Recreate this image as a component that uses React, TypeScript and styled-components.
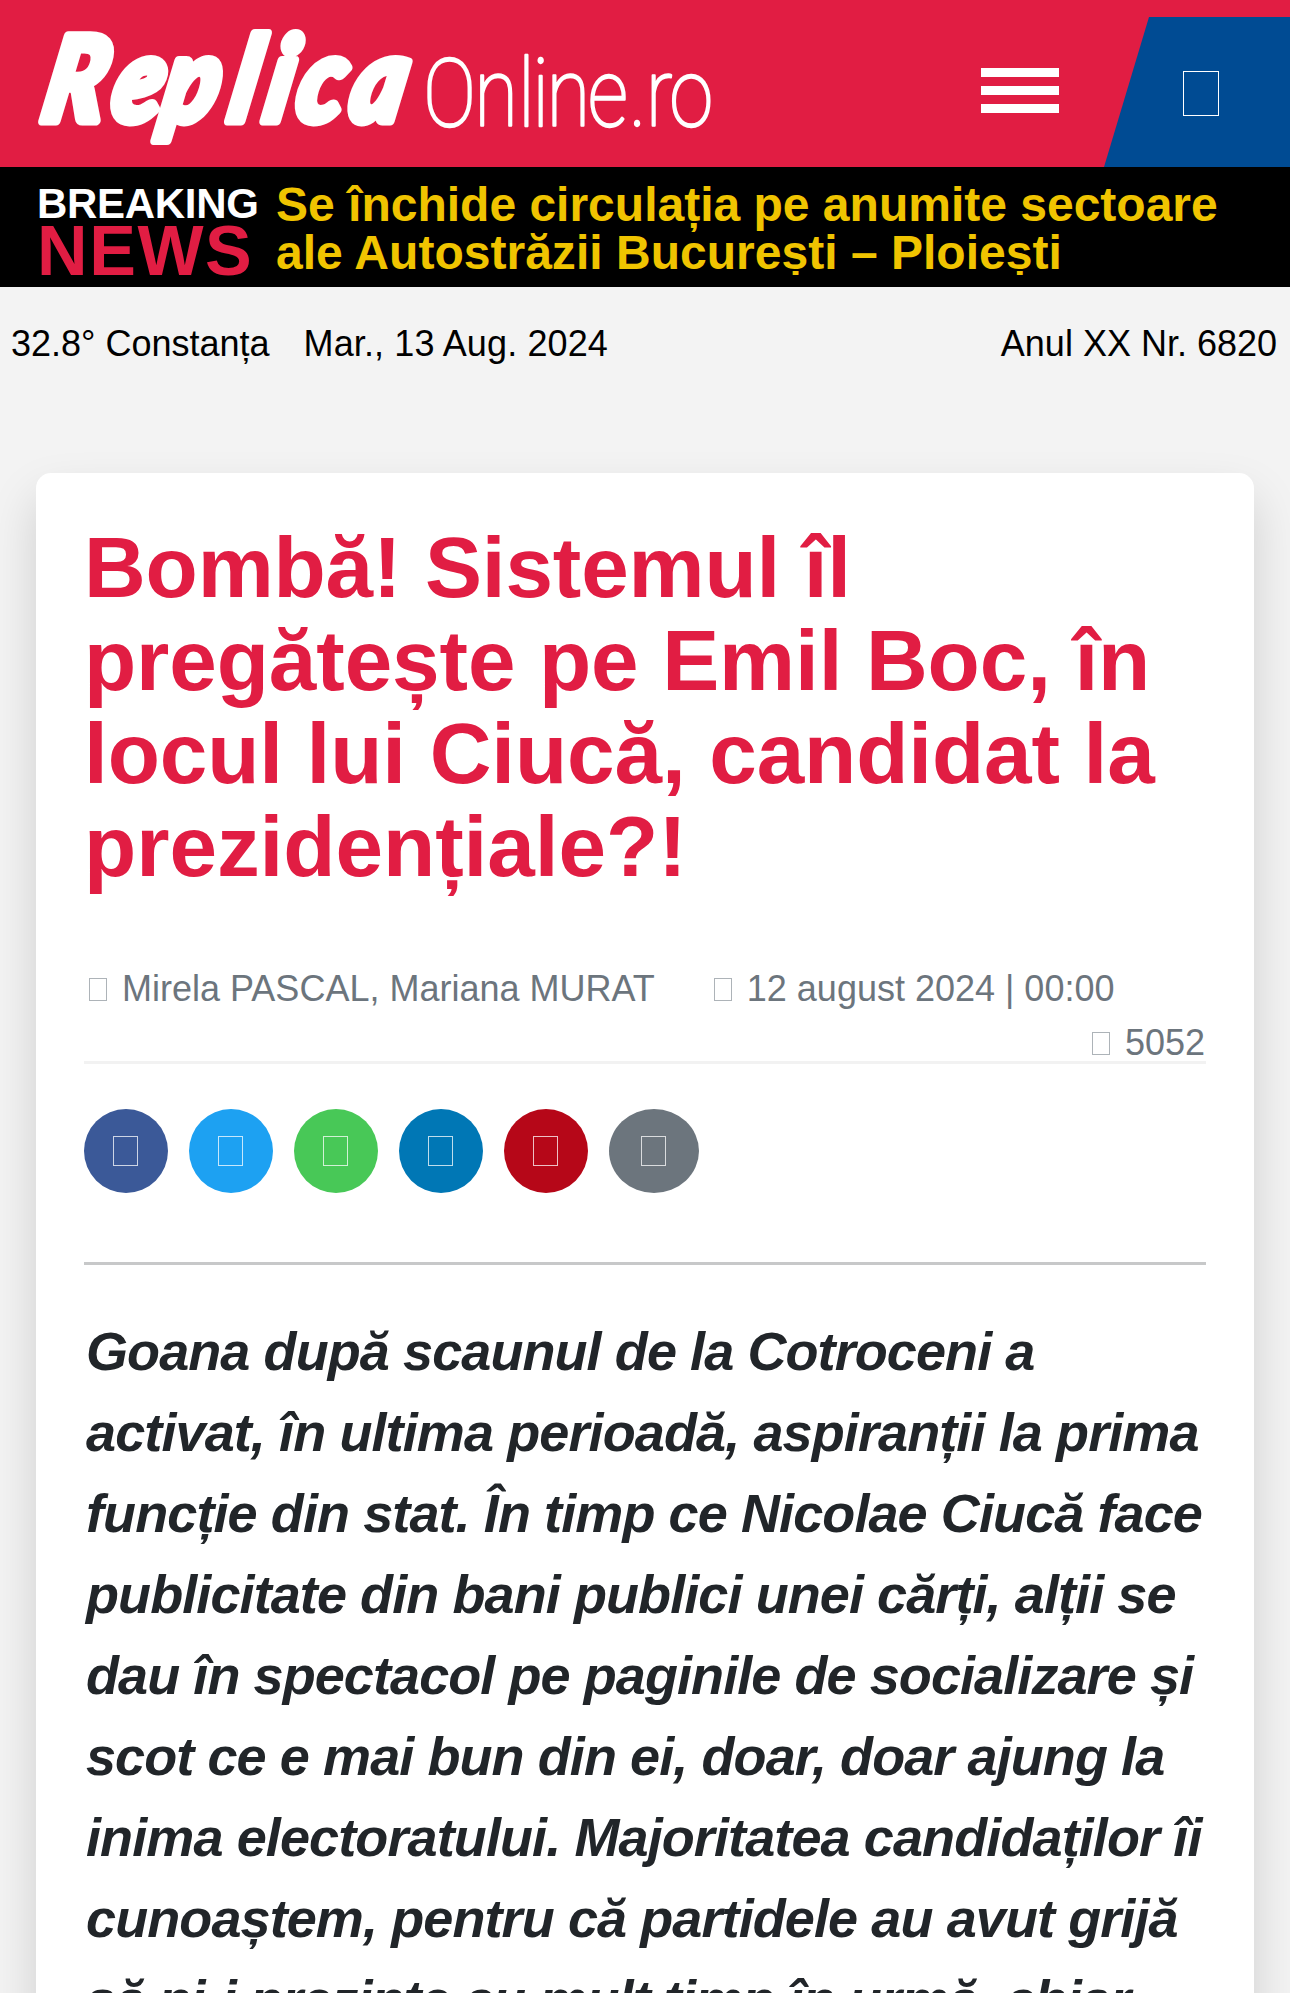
import React from "react";
import styled, { createGlobalStyle } from "styled-components";

const crimson = "#e11d43";

const GlobalStyle = createGlobalStyle`
  * { box-sizing: border-box; }
  html, body { margin: 0; padding: 0; }
  body {
    height: 1993px;
    overflow: hidden;
    background: #f3f3f3;
    color: #212529;
    font-family: "Liberation Sans", Helvetica, Arial, sans-serif;
  }
`;

const Page = styled.div`
  width: 1290px;
  height: 1993px;
  overflow: hidden;
  display: flex;
  flex-direction: column;
`;

const Header = styled.header`
  flex: none;
  height: 167px;
  background: ${crimson};
  display: flex;
  align-items: flex-end;
  justify-content: space-between;
`;

const Logo = styled.svg`
  display: block;
  width: 740px;
  height: 167px;
  overflow: visible;
`;

const Actions = styled.div`
  display: flex;
  align-items: flex-end;
  gap: 45px;
`;

const MenuButton = styled.button`
  width: 78px;
  height: 45px;
  margin: 0 0 54px;
  padding: 0;
  border: 0;
  background: none;
  display: flex;
  flex-direction: column;
  justify-content: space-between;
`;

const MenuBar = styled.span`
  height: 9px;
  background: #fff;
`;

const SearchTab = styled.div`
  width: 186px;
  height: 150px;
  padding: 54px 0 0 79px;
  background: #004b93;
  clip-path: polygon(45px 0, 100% 0, 100% 100%, 0 100%);
`;

const Glyph = styled.span<{ $w: number; $h: number; $color: string }>`
  display: block;
  flex: none;
  width: ${(p) => p.$w}px;
  height: ${(p) => p.$h}px;
  border: 1px solid ${(p) => p.$color};
`;

const Breaking = styled.section`
  flex: none;
  height: 120px;
  background: #000;
  display: flex;
  padding-left: 37px;
`;

const BreakingLabel = styled.div`
  width: 239px;
  padding-top: 18px;
  font-weight: 700;
  white-space: nowrap;
`;

const BreakingTop = styled.div`
  font-size: 42px;
  line-height: 37px;
  letter-spacing: -0.3px;
  color: #fff;
`;

const BreakingBottom = styled.div`
  font-size: 70px;
  line-height: 58px;
  letter-spacing: 1.6px;
  color: ${crimson};
`;

const BreakingTitle = styled.div`
  height: 94px;
  margin-top: 14px;
  overflow: hidden;
  font-size: 48px;
  font-weight: 700;
  line-height: 48px;
  color: #f0c400;
  white-space: nowrap;
`;

const InfoBar = styled.div`
  flex: none;
  height: 186px;
  padding: 30px 13px 0 11px;
  display: flex;
  font-size: 36px;
  line-height: 54px;
  color: #000;
  white-space: nowrap;
`;

const InfoItem = styled.span<{ $push?: boolean; $track?: number }>`
  margin-right: ${(p) => (p.$push ? "0" : "34px")};
  margin-left: ${(p) => (p.$push ? "auto" : "0")};
  letter-spacing: ${(p) => p.$track ?? 0}px;
`;

const Card = styled.article`
  flex: none;
  height: 1700px;
  margin: 0 36px;
  padding: 48px;
  border-radius: 15px;
  background: #fff;
  box-shadow: 0 24px 48px rgba(0, 0, 0, 0.15);
`;

const Line = styled.span<{ $track?: number }>`
  display: block;
  white-space: nowrap;
  letter-spacing: ${(p) => p.$track ?? 0}px;
`;

const Title = styled.h1`
  margin: 0;
  color: ${crimson};
  font-size: 85.5px;
  font-weight: 700;
  line-height: 93px;
`;

const Meta = styled.div`
  height: 102px;
  margin-top: 69px;
  padding: 0 1px 0 5px;
  border-bottom: 3px solid #f2f2f2;
  color: #6c757d;
  font-size: 36px;
  line-height: 54px;
  white-space: nowrap;
`;

const MetaRow = styled.div<{ $end?: boolean }>`
  display: flex;
  gap: 59px;
  height: 54px;
  justify-content: ${(p) => (p.$end ? "flex-end" : "flex-start")};
`;

const MetaItem = styled.span`
  display: flex;
  gap: 15px;

  ${Glyph} {
    margin-top: 16px;
  }
`;

const ShareRow = styled.div`
  display: flex;
  gap: 21px;
  margin-top: 45px;
`;

const ShareButton = styled.span<{ $bg: string; $w?: number }>`
  width: ${(p) => p.$w ?? 84}px;
  height: 84px;
  padding-right: 1px;
  border-radius: 50%;
  background: ${(p) => p.$bg};
  display: flex;
  align-items: center;
  justify-content: center;
`;

const Divider = styled.hr`
  height: 3px;
  margin: 69px 0 46px;
  border: 0;
  background: #c7c8c9;
`;

const Lead = styled.p`
  margin: 0;
  padding-left: 2px;
  font-size: 54px;
  font-style: italic;
  font-weight: 700;
  line-height: 81px;
`;

const titleLines = [
  { text: "Bombă! Sistemul îl", track: -0.15 },
  { text: "pregătește pe Emil Boc, în", track: -0.11 },
  { text: "locul lui Ciucă, candidat la", track: -0.11 },
  { text: "prezidențiale?!", track: -0.05 },
];

const leadLines = [
  { text: "Goana după scaunul de la Cotroceni a", track: -0.91 },
  { text: "activat, în ultima perioadă, aspiranții la prima", track: -0.89 },
  { text: "funcție din stat. În timp ce Nicolae Ciucă face", track: -0.9 },
  { text: "publicitate din bani publici unei cărți, alții se", track: -0.91 },
  { text: "dau în spectacol pe paginile de socializare și", track: -0.92 },
  { text: "scot ce e mai bun din ei, doar, doar ajung la", track: -0.91 },
  { text: "inima electoratului. Majoritatea candidaților îi", track: -0.89 },
  { text: "cunoaștem, pentru că partidele au avut grijă", track: -0.9 },
  { text: "să ni-i prezinte cu mult timp în urmă, chiar", track: -0.89 },
];

const shares = [
  { name: "facebook", bg: "#3b5998" },
  { name: "twitter", bg: "#1da1f2" },
  { name: "whatsapp", bg: "#48c857" },
  { name: "linkedin", bg: "#0077b5" },
  { name: "pinterest", bg: "#b60718" },
  { name: "mail", bg: "#6c757d", w: 90 },
];

export default function App() {
  return (
    <>
      <GlobalStyle />
      <Page>
        <Header>
          <Logo viewBox="0 0 740 167">
            <g transform="translate(0 121) skewX(-11) scale(0.88 1.02)">
              <text
                x="44 123 180 257 297 333 394"
                y="0"
                fill="#fff"
                stroke="#fff"
                strokeWidth="9"
                strokeLinejoin="round"
                fontFamily="Lato, sans-serif"
                fontWeight="900"
                fontStyle="italic"
                fontSize="115"
              >
                Replica
              </text>
            </g>
            <g transform="translate(0 125.5) scale(0.84 1)">
              <text
                x="504 565 617 634 651 700 749 769 797"
                y="0"
                fill="#fff"
                stroke="#fff"
                strokeWidth="2.4"
                strokeLinejoin="round"
                fontFamily="Roboto, sans-serif"
                fontWeight="100"
                fontSize="94"
              >
                Online.ro
              </text>
            </g>
          </Logo>
          <Actions>
            <MenuButton aria-label="menu">
              <MenuBar />
              <MenuBar />
              <MenuBar />
            </MenuButton>
            <SearchTab>
              <Glyph $w={36} $h={45} $color="#fff" />
            </SearchTab>
          </Actions>
        </Header>

        <Breaking>
          <BreakingLabel>
            <BreakingTop>BREAKING</BreakingTop>
            <BreakingBottom>NEWS</BreakingBottom>
          </BreakingLabel>
          <BreakingTitle>
            <Line>Se închide circulația pe anumite sectoare</Line>
            <Line $track={0.02}>ale Autostrăzii București – Ploiești</Line>
          </BreakingTitle>
        </Breaking>

        <InfoBar>
          <InfoItem>32.8° Constanța</InfoItem>
          <InfoItem $track={0.12}>Mar., 13 Aug. 2024</InfoItem>
          <InfoItem $push>Anul XX Nr. 6820</InfoItem>
        </InfoBar>

        <Card>
          <Title>
            {titleLines.map((l) => (
              <Line key={l.text} $track={l.track}>
                {l.text}
              </Line>
            ))}
          </Title>
          <Meta>
            <MetaRow>
              <MetaItem>
                <Glyph $w={18} $h={23} $color="#adb3b8" />
                Mirela PASCAL, Mariana MURAT
              </MetaItem>
              <MetaItem>
                <Glyph $w={18} $h={23} $color="#adb3b8" />
                12 august 2024 | 00:00
              </MetaItem>
            </MetaRow>
            <MetaRow $end>
              <MetaItem>
                <Glyph $w={18} $h={23} $color="#adb3b8" />
                5052
              </MetaItem>
            </MetaRow>
          </Meta>
          <ShareRow>
            {shares.map((s) => (
              <ShareButton key={s.name} $bg={s.bg} $w={s.w}>
                <Glyph $w={25} $h={30} $color="rgba(255, 255, 255, 0.75)" />
              </ShareButton>
            ))}
          </ShareRow>
          <Divider />
          <Lead>
            {leadLines.map((l) => (
              <Line key={l.text} $track={l.track}>
                {l.text}
              </Line>
            ))}
          </Lead>
        </Card>
      </Page>
    </>
  );
}
